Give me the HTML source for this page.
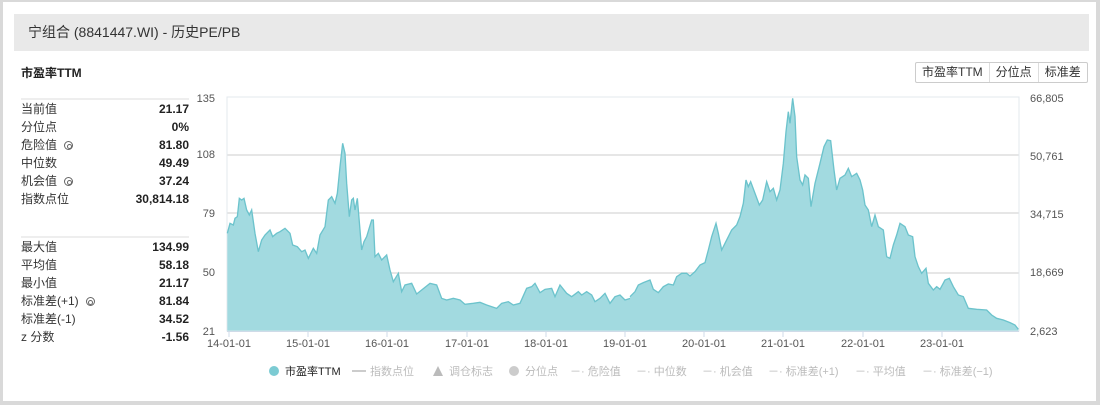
<!DOCTYPE html>
<html><head><meta charset="utf-8"><style>
*{margin:0;padding:0;box-sizing:border-box}
body{width:1100px;height:405px;background:#d9d9d9;font-family:"Liberation Sans","Noto Sans CJK SC",sans-serif;position:relative;overflow:hidden;color:#333}
#box{position:absolute;left:3px;top:2px;width:1093px;height:399px;background:#fff}
#hdr{position:absolute;left:14px;top:14px;width:1075px;height:37px;background:#e9e9e9;font-size:14px;line-height:37px;padding-left:14px;color:#333}
.t{position:absolute;left:21px;top:64px;font-size:12px;font-weight:bold;color:#222}
table{position:absolute;left:21px;border-collapse:collapse;width:168px;font-size:12px}
td{height:18px;line-height:18px;padding:0}
td.v{text-align:right;font-weight:bold;color:#222}
table{border-top:2px solid #eee}
.g{display:inline-block;width:9px;height:9px;border:1.5px solid #666;border-radius:50%;margin-left:7px;vertical-align:-1px;position:relative}
.g:after{content:"";position:absolute;left:1.5px;top:1.5px;width:3px;height:3px;border-radius:50%;border:1px solid #666}
#btns{position:absolute;left:915px;top:62px;height:21px;border:1px solid #ccc;display:flex;font-size:12px;border-radius:2px}
#btns div{padding:0 6px;line-height:19px;border-left:1px solid #ddd}
#btns div:first-child{border-left:none}
</style></head><body>
<div id="box"></div>
<div id="hdr">宁组合 (8841447.WI) - 历史PE/PB</div>
<div class="t">市盈率TTM</div>
<table style="top:98px"><tr><td>当前值</td><td class="v">21.17</td></tr><tr><td>分位点</td><td class="v">0%</td></tr><tr><td>危险值<span class="g"></span></td><td class="v">81.80</td></tr><tr><td>中位数</td><td class="v">49.49</td></tr><tr><td>机会值<span class="g"></span></td><td class="v">37.24</td></tr><tr><td>指数点位</td><td class="v">30,814.18</td></tr></table>
<table style="top:236px"><tr><td>最大值</td><td class="v">134.99</td></tr><tr><td>平均值</td><td class="v">58.18</td></tr><tr><td>最小值</td><td class="v">21.17</td></tr><tr><td>标准差(+1)<span class="g"></span></td><td class="v">81.84</td></tr><tr><td>标准差(-1)</td><td class="v">34.52</td></tr><tr><td>z 分数</td><td class="v">-1.56</td></tr></table>
<div id="btns"><div>市盈率TTM</div><div>分位点</div><div>标准差</div></div>
<svg style="position:absolute;left:0;top:0" width="1100" height="405">
<g stroke="#e6e6e6" stroke-width="2"><line x1="227" y1="155" x2="1019" y2="155"/><line x1="227" y1="213" x2="1019" y2="213"/><line x1="227" y1="273" x2="1019" y2="273"/></g>
<rect x="227" y="97" width="792" height="234" fill="none" stroke="#e3e8ee" stroke-width="1"/>
<g transform="translate(220,90) scale(0.33333)">
<polygon fill="#a2dae0" points="22,722 22,430 30,400 40,405 45,385 52,380 58,325 65,330 72,325 80,360 88,375 95,360 105,430 115,485 125,450 135,435 150,420 158,440 170,430 180,425 195,415 210,430 218,465 232,470 245,485 255,480 265,505 280,475 290,490 300,435 315,410 325,330 335,320 345,340 352,310 360,230 368,160 375,190 380,280 388,380 395,330 400,325 405,360 412,325 415,360 425,480 432,455 440,440 455,390 460,390 465,500 475,490 485,510 500,495 510,540 520,575 535,550 545,605 555,585 575,580 590,612 605,600 630,580 650,585 665,625 680,630 700,625 720,630 735,643 760,640 780,637 800,645 830,655 845,640 865,635 880,645 900,640 920,595 935,590 945,580 960,608 975,598 995,595 1005,620 1020,585 1040,610 1055,620 1075,605 1085,615 1100,605 1115,615 1125,635 1140,625 1155,610 1170,640 1185,620 1200,615 1215,630 1231,625 1231,722"/>
<polyline fill="none" stroke="#6cc3cc" stroke-width="4" points="22,430 30,400 40,405 45,385 52,380 58,325 65,330 72,325 80,360 88,375 95,360 105,430 115,485 125,450 135,435 150,420 158,440 170,430 180,425 195,415 210,430 218,465 232,470 245,485 255,480 265,505 280,475 290,490 300,435 315,410 325,330 335,320 345,340 352,310 360,230 368,160 375,190 380,280 388,380 395,330 400,325 405,360 412,325 415,360 425,480 432,455 440,440 455,390 460,390 465,500 475,490 485,510 500,495 510,540 520,575 535,550 545,605 555,585 575,580 590,612 605,600 630,580 650,585 665,625 680,630 700,625 720,630 735,643 760,640 780,637 800,645 830,655 845,640 865,635 880,645 900,640 920,595 935,590 945,580 960,608 975,598 995,595 1005,620 1020,585 1040,610 1055,620 1075,605 1085,615 1100,605 1115,615 1125,635 1140,625 1155,610 1170,640 1185,620 1200,615 1215,630 1231,625"/>
</g>
<g transform="translate(620,90) scale(0.33333)">
<polygon fill="#a2dae0" points="30,722 30,620 45,605 55,585 70,578 90,570 100,598 115,608 130,590 145,582 160,585 170,560 185,550 200,550 210,558 225,545 240,525 255,518 265,480 275,440 288,400 295,430 305,480 315,460 325,440 335,420 350,405 360,380 370,340 378,270 385,290 392,275 405,310 418,345 428,330 440,275 450,305 460,295 470,330 480,300 490,220 498,125 505,65 510,100 518,25 525,80 530,200 540,270 548,285 555,255 565,265 573,350 585,280 600,220 612,170 622,150 632,152 642,240 650,300 660,265 675,255 685,235 695,260 710,250 720,270 728,300 735,345 745,360 755,410 765,375 775,410 790,420 800,500 810,505 820,465 830,435 840,400 855,410 865,435 878,440 885,500 895,530 905,550 918,535 925,580 940,600 950,590 960,598 975,570 988,565 1000,590 1015,615 1030,620 1045,655 1070,658 1100,660 1115,675 1130,685 1150,690 1170,698 1185,705 1195,718 1195,722"/>
<polyline fill="none" stroke="#6cc3cc" stroke-width="4" points="30,620 45,605 55,585 70,578 90,570 100,598 115,608 130,590 145,582 160,585 170,560 185,550 200,550 210,558 225,545 240,525 255,518 265,480 275,440 288,400 295,430 305,480 315,460 325,440 335,420 350,405 360,380 370,340 378,270 385,290 392,275 405,310 418,345 428,330 440,275 450,305 460,295 470,330 480,300 490,220 498,125 505,65 510,100 518,25 525,80 530,200 540,270 548,285 555,255 565,265 573,350 585,280 600,220 612,170 622,150 632,152 642,240 650,300 660,265 675,255 685,235 695,260 710,250 720,270 728,300 735,345 745,360 755,410 765,375 775,410 790,420 800,500 810,505 820,465 830,435 840,400 855,410 865,435 878,440 885,500 895,530 905,550 918,535 925,580 940,600 950,590 960,598 975,570 988,565 1000,590 1015,615 1030,620 1045,655 1070,658 1100,660 1115,675 1130,685 1150,690 1170,698 1185,705 1195,718"/>
</g>
<line x1="227" y1="331.5" x2="1019" y2="331.5" stroke="#cfdbe8"/>
<g stroke="#cfdbe8"><line x1="229" y1="331" x2="229" y2="337"/><line x1="308" y1="331" x2="308" y2="337"/><line x1="387" y1="331" x2="387" y2="337"/><line x1="467" y1="331" x2="467" y2="337"/><line x1="546" y1="331" x2="546" y2="337"/><line x1="625" y1="331" x2="625" y2="337"/><line x1="704" y1="331" x2="704" y2="337"/><line x1="783" y1="331" x2="783" y2="337"/><line x1="863" y1="331" x2="863" y2="337"/><line x1="942" y1="331" x2="942" y2="337"/></g>
<g font-family="Liberation Sans,sans-serif" font-size="11" fill="#555">
<g text-anchor="end"><text x="215" y="102">135</text><text x="215" y="158">108</text><text x="215" y="217">79</text><text x="215" y="276">50</text><text x="215" y="335">21</text></g>
<text x="1030" y="102">66,805</text><text x="1030" y="160">50,761</text><text x="1030" y="218">34,715</text><text x="1030" y="276">18,669</text><text x="1030" y="335">2,623</text>
<g text-anchor="middle"><text x="229" y="347">14-01-01</text><text x="308" y="347">15-01-01</text><text x="387" y="347">16-01-01</text><text x="467" y="347">17-01-01</text><text x="546" y="347">18-01-01</text><text x="625" y="347">19-01-01</text><text x="704" y="347">20-01-01</text><text x="783" y="347">21-01-01</text><text x="863" y="347">22-01-01</text><text x="942" y="347">23-01-01</text></g>
</g>
<g font-family="Liberation Sans,Noto Sans CJK SC,sans-serif" font-size="11" fill="#bbb">
<circle cx="274" cy="371" r="5" fill="#7ccbd3"/><text x="285" y="375" fill="#222">市盈率TTM</text>
<line x1="352" y1="371" x2="366" y2="371" stroke="#ccc" stroke-width="2"/><text x="370" y="375">指数点位</text>
<polygon points="438,366 443,376 433,376" fill="#bbb"/><text x="449" y="375">调仓标志</text>
<circle cx="514" cy="371" r="5" fill="#ccc"/><text x="525" y="375">分位点</text>
<text x="570" y="375">－· 危险值</text><text x="636" y="375">－· 中位数</text><text x="702" y="375">－· 机会值</text><text x="768" y="375">－· 标准差(+1)</text><text x="855" y="375">－· 平均值</text><text x="922" y="375">－· 标准差(−1)</text>
</g>
</svg>
</body></html>
